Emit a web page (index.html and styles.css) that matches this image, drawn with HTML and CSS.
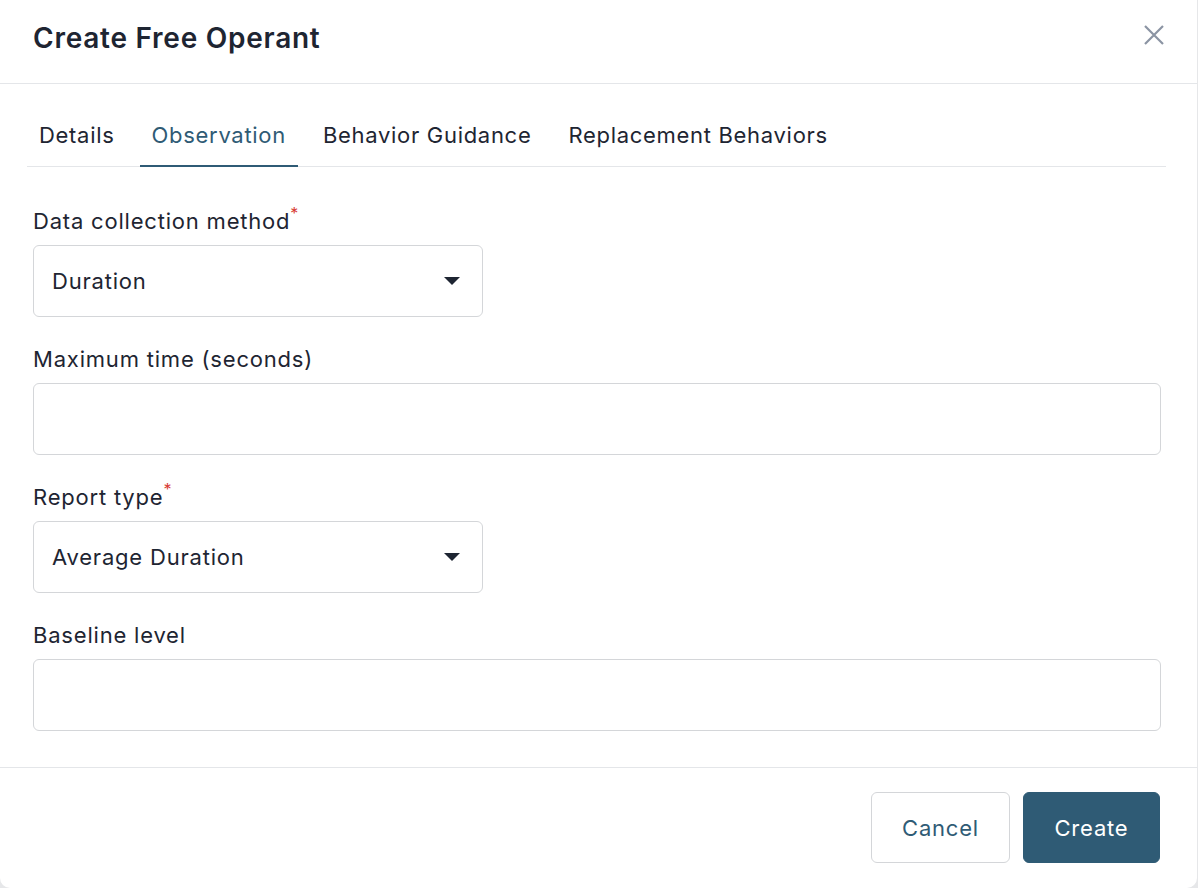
FILE: index.html
```html
<!DOCTYPE html>
<html>
<head>
<meta charset="utf-8">
<link rel="stylesheet" href="styles.css">
</head>
<body>
<div class="dialog">
  <header class="head">
    <h1 class="title">Create Free Operant</h1>
    <button class="close" aria-label="Close">
      <svg width="22" height="22" viewBox="0 0 22 22"><path d="M2 2L20 20M20 2L2 20" stroke="#8b94a3" stroke-width="2.2" fill="none"/></svg>
    </button>
  </header>
  <div class="body">
    <nav class="tabs">
      <div class="tab">Details</div>
      <div class="tab active">Observation</div>
      <div class="tab">Behavior Guidance</div>
      <div class="tab">Replacement Behaviors</div>
    </nav>
    <div class="form">
      <div class="field">
        <label class="label">Data collection method<span class="req">*</span></label>
        <div class="select half"><span>Duration</span><span class="caret"></span></div>
      </div>
      <div class="field">
        <label class="label">Maximum time (seconds)</label>
        <div class="input"></div>
      </div>
      <div class="field">
        <label class="label">Report type<span class="req">*</span></label>
        <div class="select half"><span>Average Duration</span><span class="caret"></span></div>
      </div>
      <div class="field">
        <label class="label">Baseline level</label>
        <div class="input"></div>
      </div>
    </div>
  </div>
  <footer class="foot">
    <button class="btn cancel">Cancel</button>
    <button class="btn create">Create</button>
  </footer>
</div>
</body>
</html>
```
FILE: styles.css
```css
* { box-sizing: border-box; }
html, body { margin: 0; padding: 0; }
body {
  background: #e6e7e9;
  font-family: Inter, "Noto Sans", "Liberation Sans", sans-serif;
  color: #1e2532;
  width: 1198px;
  height: 888px;
  overflow: hidden;
}
.dialog {
  width: 1197px;
  height: 888px;
  background: #fff;
  border-radius: 0 0 10px 10px;
  display: flex;
  flex-direction: column;
}
.head {
  height: 84px;
  border-bottom: 1px solid #e4e6e9;
  display: flex;
  align-items: center;
  justify-content: space-between;
  padding: 0 32px 0 33px;
}
.title {
  margin: 0;
  font-size: 28px;
  font-weight: 600;
  letter-spacing: 0.75px;
  color: #1e2532;
  position: relative;
  top: -4px;
}
.close {
  border: 0;
  background: none;
  padding: 0;
  width: 22px;
  height: 22px;
  position: relative;
  top: -7px;
}
.close svg { display: block; }
.body {
  flex: 1;
  padding: 0 31px 0 27px;
}
.tabs {
  display: flex;
  border-bottom: 1px solid #e4e6e9;
  height: 83px;
  padding-top: 24px;
  gap: 13px;
}
.tab {
  font-size: 22px;
  letter-spacing: 0.7px;
  color: #1e2532;
  padding: 0 12px 3px;
  height: 59px;
  display: flex;
  align-items: center;
  border-bottom: 2px solid transparent;
  margin-bottom: -1px;
}
.tab.active {
  color: #2f5b75;
  border-bottom-color: #2f5b75;
}
.form {
  padding: 39px 5px 0 6px;
  display: flex;
  flex-direction: column;
  gap: 27px;
}
.field { display: flex; flex-direction: column; gap: 9px; }
.label {
  font-size: 22px;
  line-height: 29px;
  height: 30px;
  padding-top: 1px;
  letter-spacing: 0.8px;
  color: #1e2532;
}
.req {
  color: #d83a34;
  font-size: 16px;
  line-height: 16px;
  vertical-align: top;
  position: relative;
  top: -2px;
  margin-left: 0;
}
.select, .input {
  height: 72px;
  border: 1px solid #d4d6d9;
  border-radius: 6px;
  background: #fff;
}
.select {
  display: flex;
  align-items: center;
  justify-content: space-between;
  padding: 0 22px 0 18px;
  font-size: 22px;
  letter-spacing: 0.8px;
  color: #1e2532;
}
.half { width: 450px; }
.caret {
  width: 0; height: 0;
  border-left: 8px solid transparent;
  border-right: 8px solid transparent;
  border-top: 8px solid #1e2532;
}
.foot {
  height: 121px;
  border-top: 1px solid #e4e6e9;
  display: flex;
  justify-content: flex-end;
  align-items: flex-start;
  gap: 13px;
  padding: 24px 37px 0 0;
}
.btn {
  height: 71px;
  border-radius: 6px;
  font-family: inherit;
  font-size: 22px;
  letter-spacing: 0.8px;
  padding: 0;
}
.cancel {
  background: #fff;
  border: 1px solid #d4d6d9;
  color: #2f5b75;
  width: 139px;
}
.create {
  background: #2f5b75;
  border: 1px solid #2f5b75;
  color: #fff;
  width: 137px;
}
```
